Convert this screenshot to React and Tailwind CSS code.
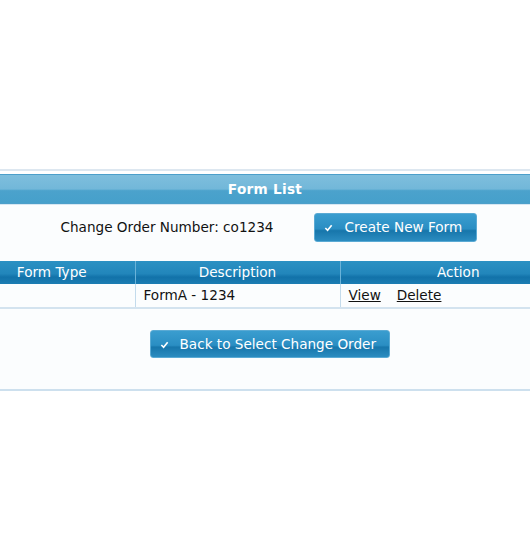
import React from 'react';

const Check = () => (
  <svg className="w-[9px] h-[9px] mr-[11px]" viewBox="0 0 10 10" fill="none" stroke="currentColor" strokeWidth="1.8">
    <path d="M1.5 5.5 L4 8 L8.5 2.5" />
  </svg>
);

const BlueButton = ({ children, className = '' }) => (
  <button
    className={`flex items-center rounded-[3px] border border-[#5aaad4] bg-[linear-gradient(#3a9dcf_0%,#2a8ec3_55%,#1776ab_62%,#2b8cc0_100%)] text-white text-[13.6px] pl-[9px] ${className}`}
  >
    <Check />
    {children}
  </button>
);

export default function App() {
  return (
    <div className="w-[530px] h-[553px] bg-white overflow-hidden font-['DejaVu_Sans',Verdana,sans-serif] text-[13.6px] text-[#111]">
      <div className="h-[169px]" />
      <div className="h-[2px] bg-[#dde7f0]" />
      <div className="h-[3px]" />
      {/* panel */}
      <div className="bg-[#fbfdfe]">
        <div className="h-[30px] border-y border-[#4c9fca] bg-[linear-gradient(#7ebedd_0%,#72b7d9_50%,#4ba2cc_56%,#46a0cb_100%)] flex items-center justify-center">
          <span className="text-white font-bold text-[13.6px] tracking-[0.3px]">Form List</span>
        </div>
        <div className="h-px bg-[#d6e7f2]" />
        <div className="flex items-center justify-center h-[44px] pl-[8px]">
          <span className="mr-[41px]">Change Order Number: co1234</span>
          <BlueButton className="w-[163px] h-[29px]">Create New Form</BlueButton>
        </div>
        <div className="h-[12px]" />
        <div className="overflow-hidden">
          <table className="w-[607px] ml-[-31px] border-collapse table-fixed">
            <colgroup>
              <col className="w-[166px]" />
              <col className="w-[205px]" />
              <col className="w-[236px]" />
            </colgroup>
            <thead>
              <tr className="h-[23px] bg-[linear-gradient(#2b91c3_0%,#2286bb_55%,#1272a9_70%,#1c7db3_100%)] text-white">
                <th className="font-normal border-r border-[#6ab3d9]">Form Type</th>
                <th className="font-normal border-r border-[#6ab3d9]">Description</th>
                <th className="font-normal">Action</th>
              </tr>
            </thead>
            <tbody>
              <tr className="h-[24px] border-b-2 border-[#d3e3ef]">
                <td className="border-r border-[#c3dbec]" />
                <td className="border-r border-[#c3dbec] pl-[8px]">FormA - 1234</td>
                <td className="pl-[8px]">
                  <span className="underline mr-[16px]">View</span>
                  <span className="underline">Delete</span>
                </td>
              </tr>
            </tbody>
          </table>
        </div>
        <div className="flex justify-center pt-[21px] pb-[31px]">
          <BlueButton className="w-[240px] h-[28px] ml-[9px]">Back to Select Change Order</BlueButton>
        </div>
        <div className="h-[2px] bg-[#cde0ee]" />
      </div>
    </div>
  );
}
